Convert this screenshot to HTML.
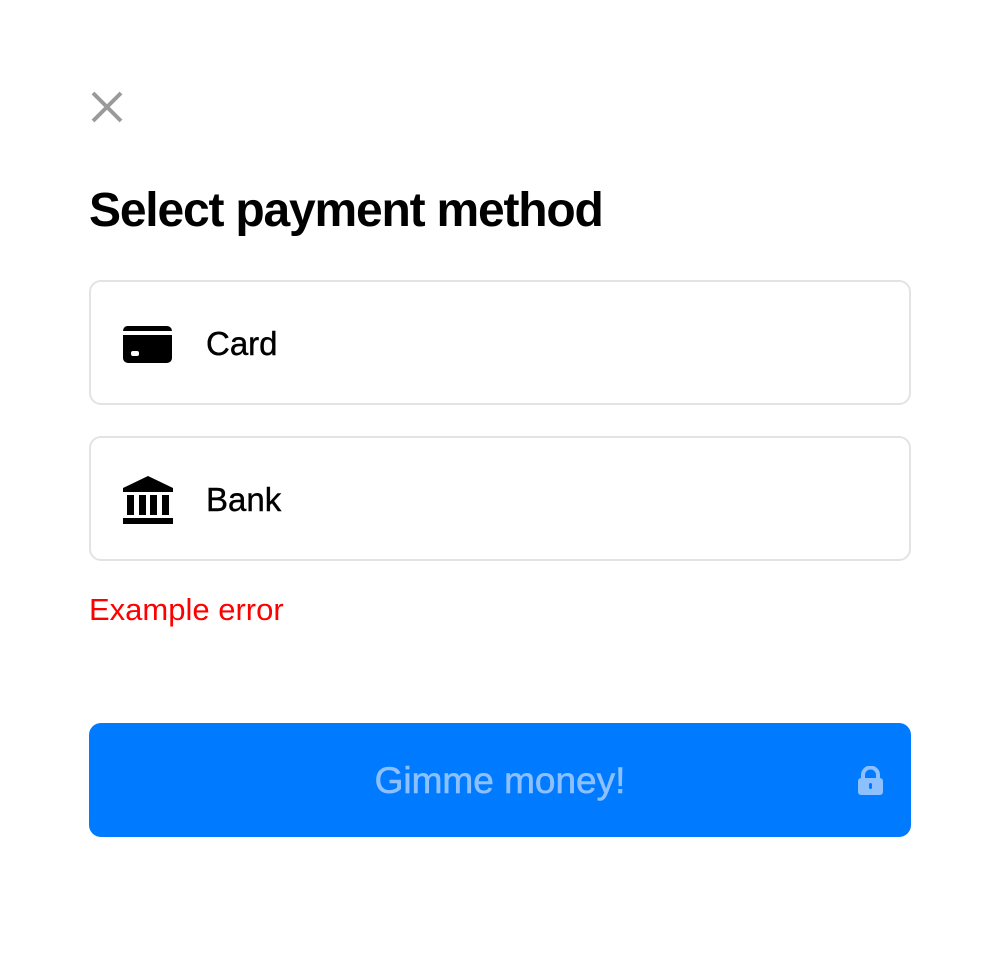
<!DOCTYPE html>
<html><head><style>
body{margin:0;width:1000px;height:975px;background:#fff;font-family:"Liberation Sans",Roboto,sans-serif;position:relative;overflow:hidden}
.abs{position:absolute}
.box{position:absolute;left:89px;width:818px;height:121px;border:2px solid #e3e3e3;border-radius:12px}
.lbl{position:absolute;left:115px;font-size:33px;color:#000;line-height:40px;top:42px;-webkit-text-stroke:0.4px #000}
</style></head><body>
<svg class="abs" style="left:90px;top:90px" width="34" height="34" viewBox="0 0 34 34"><path d="M3 3L31 31M31 3L3 31" stroke="#9a9a9a" stroke-width="4"/></svg>
<div class="abs" style="left:89px;top:181px;font-size:48px;font-weight:bold;line-height:60px;letter-spacing:-1.2px">Select payment method</div>
<div class="box" style="top:280px">
<svg class="abs" style="left:31px;top:42px" width="52" height="40" viewBox="0 0 52 40"><path d="M5 2H45a5 5 0 0 1 5 5V7H1V7a5 5 0 0 1 4-5Z" fill="#000"/><path d="M1 11H50V34a5 5 0 0 1-5 5H6a5 5 0 0 1-5-5Z" fill="#000"/><rect x="9" y="27" width="8" height="5" rx="2" fill="#fff"/></svg>
<div class="lbl">Card</div></div>
<div class="box" style="top:436px">
<svg class="abs" style="left:31px;top:36px" width="52" height="52" viewBox="0 0 52 52"><path d="M26 2L1 14V18H51V14Z" fill="#000"/><rect x="5" y="21" width="7" height="20" fill="#000"/><rect x="17" y="21" width="7" height="20" fill="#000"/><rect x="28" y="21" width="7" height="20" fill="#000"/><rect x="40" y="21" width="7" height="20" fill="#000"/><rect x="1" y="44" width="50" height="6" fill="#000"/></svg>
<div class="lbl">Bank</div></div>
<div class="abs" style="left:89px;top:590px;font-size:31px;color:#ff0000;line-height:40px">Example error</div>
<div class="abs" style="left:89px;top:723px;width:822px;height:114px;background:#007aff;border-radius:12px">
<div class="abs" style="left:0;width:822px;top:36px;text-align:center;font-size:37px;color:#8cc0ff;line-height:44px;-webkit-text-stroke:0.6px #8cc0ff">Gimme money!</div>
<svg class="abs" style="left:768px;top:43px" width="27" height="30" viewBox="0 0 27 30"><path d="M6 13V9a7.5 7.5 0 0 1 15 0V13" stroke="#8cc0ff" stroke-width="4" fill="none"/><rect x="1" y="12" width="25" height="17" rx="3" fill="#8cc0ff"/><rect x="12" y="17" width="3" height="6" rx="1.5" fill="#007aff"/></svg>
</div>
</body></html>
